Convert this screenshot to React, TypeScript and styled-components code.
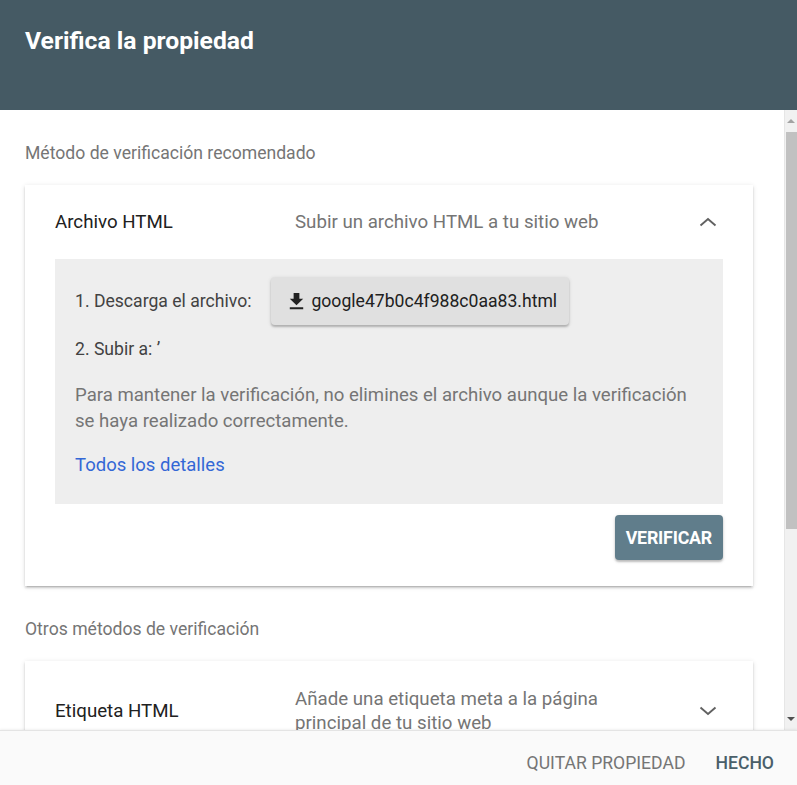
import React from "react";
import styled, { createGlobalStyle } from "styled-components";

const GlobalStyle = createGlobalStyle`
  html, body {
    margin: 0;
    padding: 0;
    height: 100%;
    overflow: hidden;
    font-family: Roboto, "Noto Sans", Arial, sans-serif;
    color: #212121;
  }
  * { box-sizing: border-box; }
`;

const Dialog = styled.div`
  height: 100vh;
  display: flex;
  flex-direction: column;
  background: #fff;
`;

const Header = styled.header`
  height: 110px;
  flex: none;
  background: #455a64;
  padding: 26px 25px 0;
`;

const Title = styled.h1`
  margin: 0;
  font-size: 24.7px;
  line-height: 30px;
  font-weight: 700;
  color: #fff;
`;

const Middle = styled.div`
  flex: 1;
  min-height: 0;
  display: flex;
`;

const Body = styled.main`
  flex: 1;
  overflow: hidden;
  padding: 31px 31px 40px 25px;
`;

const ScrollTrack = styled.div`
  width: 13px;
  flex: none;
  display: flex;
  flex-direction: column;
  align-items: center;
  background: #f1f1f1;
  border-left: 1px solid #e6e6e6;
`;

const ScrollArrow = styled.div<{ $down?: boolean }>`
  width: 0;
  height: 0;
  margin: ${(p) => (p.$down ? "auto 0 9px" : "9px 0 0")};
  border-left: 4px solid transparent;
  border-right: 4px solid transparent;
  ${(p) =>
    p.$down ? "border-top: 4px solid #505050;" : "border-bottom: 4px solid #a3a3a3;"}
`;

const ScrollThumb = styled.div`
  width: 11px;
  height: 397px;
  margin-top: 9px;
  background: #c1c1c1;
`;

const SectionLabel = styled.div<{ $top?: number }>`
  font-size: 17.6px;
  line-height: 24px;
  color: #757575;
  margin-top: ${(p) => p.$top ?? 0}px;
  margin-bottom: 20px;
`;

const Card = styled.section`
  background: #fff;
  box-shadow: 0 2px 2px rgba(0, 0, 0, 0.14), 0 1px 5px rgba(0, 0, 0, 0.12),
    0 3px 1px -2px rgba(0, 0, 0, 0.1);
  padding: 0 30px;
`;

const CardHeader = styled.div<{ $pad: number }>`
  display: flex;
  align-items: center;
  padding: ${(p) => p.$pad}px 0;
`;

const CardTitle = styled.div`
  width: 240px;
  flex: none;
  font-size: 18.7px;
  line-height: 24px;
  color: #212121;
`;

const CardSubtitle = styled.div`
  flex: 1;
  font-size: 18.7px;
  line-height: 24px;
  color: #757575;
`;

const SubtitleText = styled.div`
  max-width: 340px;
`;

const Chevron = styled.svg`
  width: 24px;
  height: 24px;
  flex: none;
  margin-right: 3px;
`;

const Steps = styled.div`
  background: #eeeeee;
  padding: 17px 20px 26px;
  font-size: 17.6px;
  color: #424242;
`;

const StepRow = styled.div`
  display: flex;
  align-items: center;
  gap: 20px;
  height: 50px;
`;

const StepLine = styled.div`
  margin-top: 10px;
  line-height: 26px;
`;

const FileButton = styled.button`
  display: flex;
  align-items: center;
  gap: 3px;
  height: 48px;
  padding: 0 12px 0 14px;
  border: none;
  border-radius: 4px;
  background: #e0e0e0;
  color: #212121;
  font-family: inherit;
  font-size: 17.6px;
  box-shadow: 0 2px 2px rgba(0, 0, 0, 0.2), 0 1px 4px rgba(0, 0, 0, 0.12);
`;

const Note = styled.p`
  margin: 20px 0 0;
  font-size: 18.6px;
  line-height: 26px;
  color: #757575;
`;

const Link = styled.a`
  display: block;
  margin-top: 18px;
  font-size: 18.5px;
  line-height: 26px;
  color: #3367d6;
  text-decoration: none;
`;

const Actions = styled.div`
  display: flex;
  justify-content: flex-end;
  padding: 11px 0 26px;
`;

const VerifyButton = styled.button`
  height: 45px;
  padding: 0 11px;
  border: none;
  border-radius: 4px;
  background: #607d8b;
  color: #fff;
  font-family: inherit;
  font-size: 17.8px;
  font-weight: 700;
  letter-spacing: -0.2px;
  box-shadow: 0 2px 2px rgba(0, 0, 0, 0.2), 0 1px 4px rgba(0, 0, 0, 0.12);
`;

const Footer = styled.footer`
  height: 55px;
  flex: none;
  display: flex;
  align-items: center;
  justify-content: flex-end;
  gap: 14px;
  padding: 10px 15px 0 0;
  background: #fafafa;
  border-top: 1px solid #e4e4e4;
  box-shadow: 0 -1px 2px rgba(0, 0, 0, 0.06);
`;

const TextButton = styled.button<{ $primary?: boolean }>`
  border: none;
  background: none;
  padding: 6px 8px;
  font-family: inherit;
  font-size: 17.6px;
  font-weight: ${(p) => (p.$primary ? 500 : 400)};
  color: ${(p) => (p.$primary ? "#4a5f6a" : "#757575")};
`;

const ChevronIcon = ({ up }: { up?: boolean }) => (
  <Chevron viewBox="0 0 24 24">
    <path
      d={up ? "M4.5 15.5l7.5-6.5 7.5 6.5" : "M4.5 8.5l7.5 6.5 7.5-6.5"}
      fill="none"
      stroke="#616161"
      strokeWidth="1.9"
    />
  </Chevron>
);

const DownloadIcon = () => (
  <svg width="23" height="23" viewBox="0 0 24 24">
    <path d="M19 9h-4V3H9v6H5l7 7 7-7zM5 18v2h14v-2H5z" fill="#212121" />
  </svg>
);

const otherMethods = [
  { title: "Etiqueta HTML", sub: "Añade una etiqueta meta a la página principal de tu sitio web", pad: 26 },
  { title: "Google Analytics", sub: "Usa tu cuenta de Google Analytics", pad: 26 },
  { title: "Google Tag Manager", sub: "Usa tu cuenta de Google Tag Manager", pad: 26 },
];

export default function App() {
  return (
    <>
      <GlobalStyle />
      <Dialog>
        <Header>
          <Title>Verifica la propiedad</Title>
        </Header>
        <Middle>
          <Body>
            <SectionLabel>Método de verificación recomendado</SectionLabel>
            <Card>
              <CardHeader $pad={25}>
                <CardTitle>Archivo HTML</CardTitle>
                <CardSubtitle>
                  <SubtitleText>Subir un archivo HTML a tu sitio web</SubtitleText>
                </CardSubtitle>
                <ChevronIcon up />
              </CardHeader>
              <Steps>
                <StepRow>
                  <span>1. Descarga el archivo:</span>
                  <FileButton>
                    <DownloadIcon />
                    google47b0c4f988c0aa83.html
                  </FileButton>
                </StepRow>
                <StepLine>2. Subir a: ʼ</StepLine>
                <Note>
                  Para mantener la verificación, no elimines el archivo aunque la verificación
                  se haya realizado correctamente.
                </Note>
                <Link href="#">Todos los detalles</Link>
              </Steps>
              <Actions>
                <VerifyButton>VERIFICAR</VerifyButton>
              </Actions>
            </Card>
            <SectionLabel $top={31}>Otros métodos de verificación</SectionLabel>
            {otherMethods.map((m) => (
              <Card key={m.title}>
                <CardHeader $pad={m.pad}>
                  <CardTitle>{m.title}</CardTitle>
                  <CardSubtitle>
                    <SubtitleText>{m.sub}</SubtitleText>
                  </CardSubtitle>
                  <ChevronIcon />
                </CardHeader>
              </Card>
            ))}
          </Body>
          <ScrollTrack>
            <ScrollArrow />
            <ScrollThumb />
            <ScrollArrow $down />
          </ScrollTrack>
        </Middle>
        <Footer>
          <TextButton>QUITAR PROPIEDAD</TextButton>
          <TextButton $primary>HECHO</TextButton>
        </Footer>
      </Dialog>
    </>
  );
}
